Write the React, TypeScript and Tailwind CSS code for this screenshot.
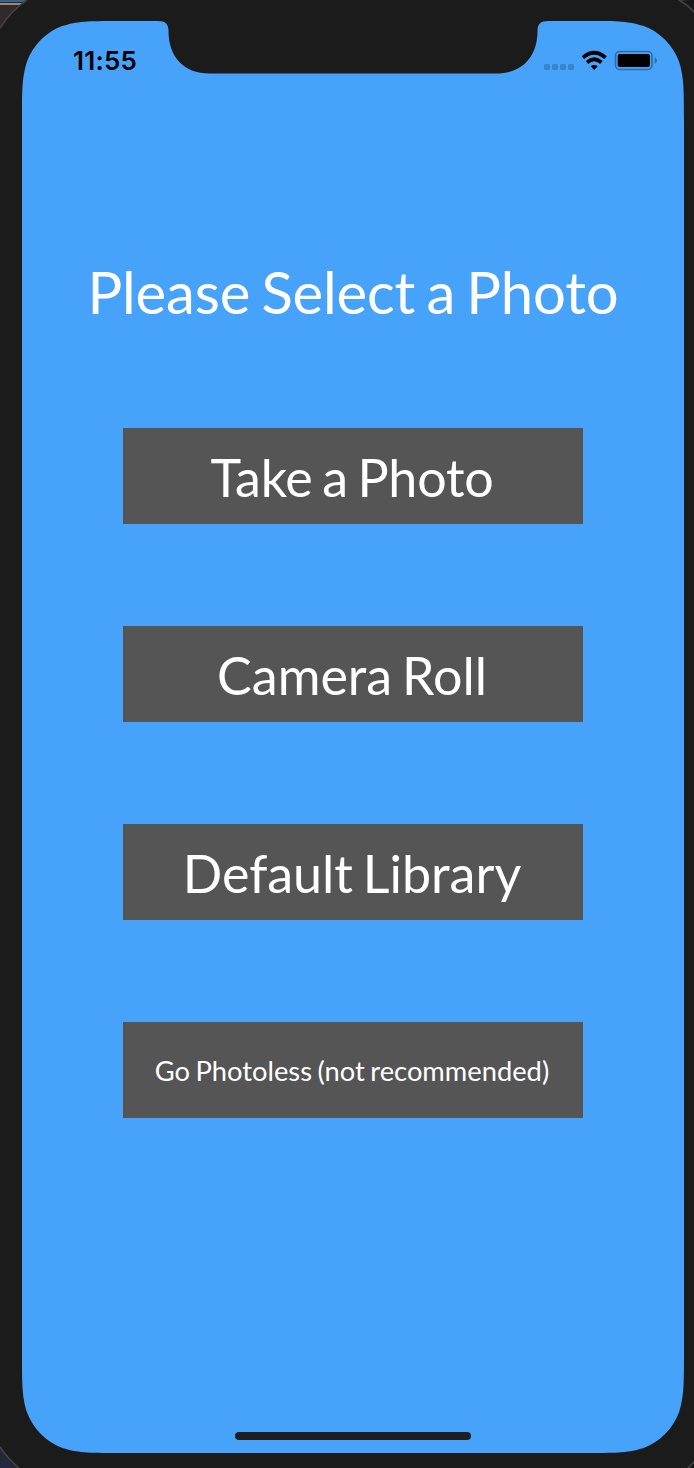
import type { ReactNode } from "react";

function Corner({ className }: { className: string }) {
  return (
    <svg className={`absolute size-[99px] ${className}`} viewBox="0 0 1.52866 1.52866" aria-hidden="true">
      <path
        fill="#1b1b1b"
        d="M-.02-.02H1.52866V0C1.08849 0 .86841 0 .66993 .06549L.63149 .07491C.37282 .16906 .16906 .37282 .07491 .63149C0 .86841 0 1.08849 0 1.52866H-.02Z"
      />
    </svg>
  );
}

function Notch() {
  return (
    <svg className="absolute left-[136px] top-0 h-[53px] w-[390px]" viewBox="0 0 390 53" aria-hidden="true">
      <path
        fill="#1b1b1b"
        d="M0 0C7.500 0 10.500 3 10.500 10C10.500 35 25 52.500 52 52.500H338C365 52.500 379.500 35 379.500 10C379.500 3 382.500 0 390 0Z"
      />
    </svg>
  );
}

function StatusIcons() {
  return (
    <svg className="mt-7 h-[24px] w-[116px]" viewBox="542 49 116 24" aria-hidden="true">
      <g fill="#3883c5">
        <rect x="544" y="64" width="6" height="6" rx="1.700" />
        <rect x="552" y="64" width="6" height="6" rx="1.700" />
        <rect x="560" y="64" width="6" height="6" rx="1.700" />
        <rect x="568" y="64" width="6" height="6" rx="1.700" />
      </g>
      <g fill="none" stroke="#000" strokeWidth="3.800">
        <path d="M582.900 57.600Q594.200 47.800 605.500 57.600" />
        <path d="M587 62.500Q594.200 56.200 601.400 62.500" />
      </g>
      <path d="M590.700 66.300Q594.200 63.500 597.700 66.300L594.200 69.900Z" />
      <rect x="615.500" y="51.500" width="36.500" height="18" rx="4.200" fill="none" stroke="#2e6ca3" strokeWidth="1.600" />
      <rect x="617.700" y="53.900" width="32.300" height="13.200" rx="2" />
      <path fill="#2e6ca3" d="M654.700 57.300C657.500 58.500 657.500 62.500 654.700 63.700Z" />
    </svg>
  );
}

function ChoiceButton({ children, small = false }: { children: ReactNode; small?: boolean }) {
  return (
    <button
      type="button"
      className={`flex h-24 w-[460px] items-center justify-center whitespace-nowrap bg-[#555555] pr-[2px] text-white ${
        small ? "pt-[3px] text-[27.3px] [word-spacing:-1.5px]" : "pt-[2px] text-[52px] [word-spacing:-3.5px]"
      }`}
    >
      {children}
    </button>
  );
}

export default function App() {
  return (
    <div className="relative h-[1468px] w-[694px] overflow-hidden bg-[#1b1b1b] pl-[22px] pt-[21px] font-['Lato',sans-serif]">
      <svg className="absolute inset-0 size-full" viewBox="0 0 694 1468" aria-hidden="true">
        <path fill="#302b2a" d="M0 0H26Q11 11 0 27Z" />
        <path fill="#36658a" d="M0 0H26L23 2H0Z" />
        <path fill="#a58475" d="M0 3H22L20 5H0Z" />
        <path fill="none" stroke="#454545" strokeWidth="1.500" d="M27 0Q11 11 0 28" />
        <path fill="#25283a" d="M0 1447Q8 1459 19 1468H0Z" />
        <path fill="none" stroke="#454545" strokeWidth="1.500" d="M0 1447Q8 1459 19 1468" />
        <path fill="#171719" stroke="#454545" strokeWidth="1.500" d="M679 0Q688 5 695 13V-1Z" />
        <path fill="#111" stroke="#454545" strokeWidth="1.500" d="M688 1468L695 1461V1469Z" />
      </svg>

      <main className="relative flex h-[1432px] w-[662px] flex-col items-center bg-[#47a3fa]">
        <Corner className="left-0 top-0" />
        <Corner className="right-0 top-0 -scale-x-100" />
        <Corner className="bottom-0 left-0 -scale-y-100" />
        <Corner className="bottom-0 right-0 -scale-100" />
        <Notch />

        <header className="relative flex h-[60px] w-full items-start justify-between pl-[51px] pr-[26px]">
          <span className="mt-6 font-['Inter',sans-serif] text-[26px] font-semibold leading-8 tracking-[0.2px] text-black">
            11:55
          </span>
          <StatusIcons />
        </header>

        <h1 className="mt-[171px] whitespace-nowrap text-[58px] leading-[80px] tracking-[-0.15px] text-white [word-spacing:-3.5px]">
          Please Select a Photo
        </h1>

        <div className="mt-[96px] flex flex-col gap-[102px]">
          <ChoiceButton>
            <span className="tracking-[-0.2px]">Take a Photo</span>
          </ChoiceButton>
          <ChoiceButton>Camera Roll</ChoiceButton>
          <ChoiceButton>Default Library</ChoiceButton>
          <ChoiceButton small>Go Photoless (not recommended)</ChoiceButton>
        </div>

        <div className="mb-[13px] mt-auto h-2 w-[236px] rounded-full bg-[#1c1e20]" />
      </main>
    </div>
  );
}
